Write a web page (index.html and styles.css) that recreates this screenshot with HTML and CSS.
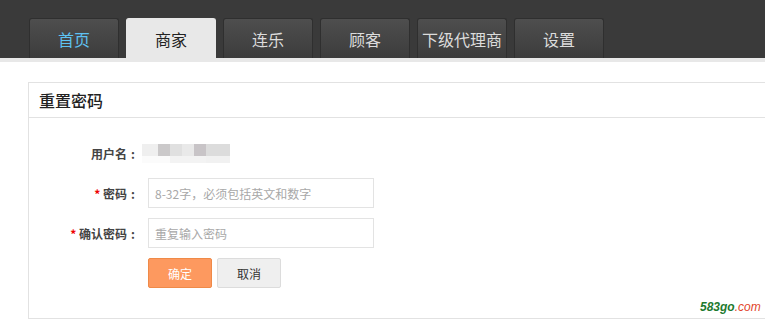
FILE: index.html
```html
<!DOCTYPE html>
<html lang="zh">
<head>
<meta charset="utf-8">
<title>重置密码</title>
<link rel="stylesheet" href="styles.css">
</head>
<body>
<header class="topbar">
  <nav class="tabs">
    <a class="tab tab-home">首页</a>
    <a class="tab tab-active">商家</a>
    <a class="tab">连乐</a>
    <a class="tab">顾客</a>
    <a class="tab">下级代理商</a>
    <a class="tab">设置</a>
  </nav>
</header>
<div class="strip"></div>
<section class="panel">
  <div class="panel-head">重置密码</div>
  <div class="form">
    <div class="row">
      <label class="label">用户名<span class="colon">:</span></label>
      <div class="blur">
        <div class="blur-top"><i class="b1"></i><i class="b2"></i><i class="b3"></i><i class="b4"></i><i class="b5"></i><i class="b6"></i></div>
        <div class="blur-bot"><i class="c1"></i><i class="c2"></i><i class="c3"></i></div>
      </div>
    </div>
    <div class="row">
      <label class="label"><span class="req">*</span> 密码<span class="colon">:</span></label>
      <input class="input" type="password" placeholder="8-32字，必须包括英文和数字">
    </div>
    <div class="row">
      <label class="label"><span class="req">*</span> 确认密码<span class="colon">:</span></label>
      <input class="input" type="password" placeholder="重复输入密码">
    </div>
    <div class="row">
      <span class="label"></span>
      <button class="btn btn-ok">确定</button>
      <button class="btn btn-cancel">取消</button>
    </div>
  </div>
  <div class="mark"><span class="mark-a">583go</span><span class="mark-b">.com</span></div>
</section>
</body>
</html>
```
FILE: styles.css
```css
html { overflow: hidden; }
body {
  margin: 0;
  background: #fff;
  font-family: "Noto Sans CJK SC", "Liberation Sans", sans-serif;
  color: #333;
}
.topbar {
  height: 58px;
  background: #3a3a3a;
  box-sizing: border-box;
  padding: 18px 0 0 29px;
}
.tabs {
  display: flex;
  gap: 7px;
  height: 40px;
}
.tab {
  width: 90px;
  height: 40px;
  box-sizing: border-box;
  border: 1px solid #2f2f2f;
  border-bottom: none;
  border-radius: 3px 3px 0 0;
  background: linear-gradient(#4e4e4e, #3c3c3c);
  color: #dcdcdc;
  font-size: 16px;
  line-height: 40px;
  text-align: center;
  white-space: nowrap;
}
.tab-home { color: #5ec2f2; }
.tab-active {
  background: #e8e8e8;
  border-color: #e8e8e8;
  color: #222;
}
.strip {
  height: 4px;
  background: #e8e8e8;
}
.panel {
  position: relative;
  margin: 20px 0 0 28px;
  height: 237px;
  box-sizing: border-box;
  border: 1px solid #e2e2e2;
  border-right: none;
}
.panel-head {
  height: 35px;
  box-sizing: border-box;
  border-bottom: 1px solid #e2e2e2;
  padding-left: 10px;
  font-size: 16px;
  font-weight: 500;
  line-height: 34px;
  color: #222;
}
.form {
  padding-top: 20px;
  display: flex;
  flex-direction: column;
  gap: 10px;
}
.row {
  display: flex;
  align-items: center;
  height: 30px;
}
.label {
  width: 110px;
  margin-right: 9px;
  text-align: right;
  font-size: 12px;
  font-weight: bold;
  color: #444;
  flex: none;
}
.colon {
  display: inline-block;
  width: 12px;
  text-align: center;
}
.req { color: #e00; }
.input {
  width: 226px;
  height: 30px;
  box-sizing: border-box;
  border: 1px solid #e3e3e3;
  padding: 0 6px;
  font-family: inherit;
  font-size: 12px;
  outline: none;
}
.input::placeholder { color: #a8a8a8; }
.blur {
  margin-left: -6px;
  display: flex;
  flex-direction: column;
}
.blur i { display: block; height: 12px; }
.blur-top, .blur-bot { display: flex; }
.b1 { width: 16px; background: #efefef; }
.b2 { width: 12px; background: #cbc9ca; }
.b3 { width: 12px; background: #e0e0e0; }
.b4 { width: 12px; background: #e9e9e9; }
.b5 { width: 12px; background: #c8c4c7; }
.b6 { width: 24px; background: #dcdcdc; }
.blur-bot i { height: 7px; }
.c1 { width: 28px; background: #fbfbfb; }
.c2 { width: 36px; background: #f3f3f3; }
.c3 { width: 24px; background: #f1f1f1; }
.btn {
  height: 30px;
  box-sizing: border-box;
  font-family: inherit;
  font-size: 12px;
  border-radius: 2px;
  padding: 0;
}
.btn-ok {
  width: 64px;
  background: #fd995f;
  border: 1px solid #ef8a48;
  color: #fff;
}
.btn-cancel {
  width: 64px;
  margin-left: 5px;
  background: #efefef;
  border: 1px solid #dcdcdc;
  color: #333;
}
.mark {
  position: absolute;
  left: 671px;
  top: 217px;
  font-family: "Liberation Sans", sans-serif;
  font-style: italic;
  font-size: 12px;
  line-height: 14px;
}
.mark-a { color: #1d7a2e; font-weight: bold; }
.mark-b { color: #e2452a; }
```
